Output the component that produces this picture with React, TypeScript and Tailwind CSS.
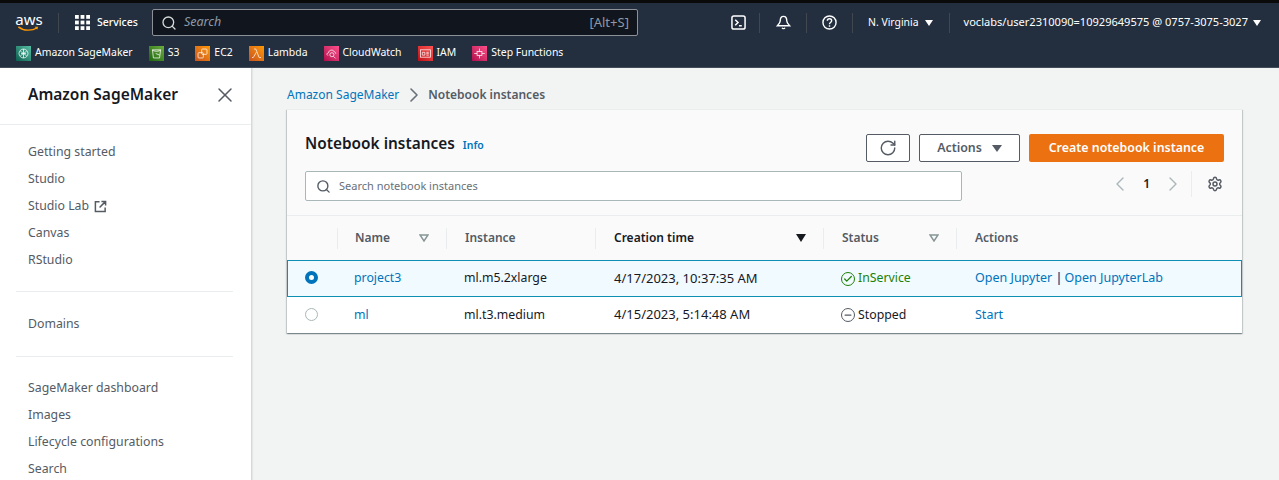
import React from 'react';
import { Check, ChevronLeft, ChevronRight, Minus, RotateCw, Search, Settings, X } from 'lucide-react';

const font = "font-['Noto_Sans','Open_Sans',sans-serif]";

const favorites = [
  { label: 'Amazon SageMaker', color: 'from-[#055f4e] to-[#56c0a7]', glyph: 'sage' },
  { label: 'S3', color: 'from-[#1b660f] to-[#6cae3e]', glyph: 's3' },
  { label: 'EC2', color: 'from-[#c8511b] to-[#ff9900]', glyph: 'ec2' },
  { label: 'Lambda', color: 'from-[#c8511b] to-[#ff9900]', glyph: 'lambda' },
  { label: 'CloudWatch', color: 'from-[#b0084d] to-[#ff4f8b]', glyph: 'cloud' },
  { label: 'IAM', color: 'from-[#bd0816] to-[#ff5252]', glyph: 'iam' },
  { label: 'Step Functions', color: 'from-[#b0084d] to-[#ff4f8b]', glyph: 'step' },
];

function FavIcon({ glyph }: { glyph: string }) {
  return (
    <svg viewBox="0 0 16 16" className="w-[13px] h-[13px]" fill="none" stroke="white" strokeWidth="0.9">
      {glyph === 'sage' && <><circle cx="8" cy="8" r="5.5" /><path d="M4 5l8 6M4 11l8-6M8 2.5v11M5 8h6" /></>}
      {glyph === 's3' && <><path d="M3 3.5h10l-1.2 10H4.2zM3 3.5c1 2.4 9 2.4 10 0" /><path d="M7 8l5 2" /></>}
      {glyph === 'ec2' && <><rect x="2.5" y="7" width="6.5" height="6.5" rx="1" /><rect x="7" y="2.5" width="6.5" height="6.5" rx="1" /></>}
      {glyph === 'lambda' && <path d="M5 2.5h2.2l4 10.5H13.5M7.8 6.5L4 13H2.5" />}
      {glyph === 'cloud' && <><path d="M3.5 10.5c-2-1-1-3.5 1-3.5 0-3.5 5.5-4.5 7-1 1.5.2 2 1.5 1.5 2.5" /><circle cx="8.5" cy="9.5" r="2.5" /><path d="M10.5 11.5l2.5 2.5" /></>}
      {glyph === 'iam' && <><rect x="2" y="3.5" width="12" height="9" /><path d="M4 6.5h3.2v3.5H4zM9 6.5h3M9 8.2h3M9 10h3" /></>}
      {glyph === 'step' && <><rect x="5" y="5.5" width="6" height="5" /><path d="M1.5 8H5M11 8h3.5M8 2v3.5M8 10.5V14" /></>}
    </svg>
  );
}

function Sep({ className }: { className: string }) {
  return <div className={`w-px h-5 bg-[#414750] ${className}`} />;
}

function TopNav() {
  return (
    <header className={`bg-[#232f3e] border-t-[3px] border-[#0a0a0a] border-b border-b-[#434d5a] h-[68px] text-white ${font}`}>
      <div className="h-[37px] pt-[2px] flex items-center pl-[15px] pr-[18px]">
        <div className="w-[28px] flex flex-col items-center">
          <span className="text-[15px] leading-[13px] font-normal">aws</span>
          <svg viewBox="0 0 28 7" className="w-[25px] h-[6px]">
            <path d="M1 1c6 5 16 5 22 1" fill="none" stroke="#ff9900" strokeWidth="1.6" />
            <path d="M20 1l4 0-1 3.5z" fill="#ff9900" />
          </svg>
        </div>
        <Sep className="ml-[15px] mr-[16px]" />
        <svg viewBox="0 0 15 15" className="w-[15px] h-[15px] fill-white">
          <rect x="0" y="0" width="3.8" height="3.8" />
          <rect x="5.6" y="0" width="3.8" height="3.8" />
          <rect x="11.2" y="0" width="3.8" height="3.8" />
          <rect x="0" y="5.6" width="3.8" height="3.8" />
          <rect x="5.6" y="5.6" width="3.8" height="3.8" />
          <rect x="11.2" y="5.6" width="3.8" height="3.8" />
          <rect x="0" y="11.2" width="3.8" height="3.8" />
          <rect x="5.6" y="11.2" width="3.8" height="3.8" />
          <rect x="11.2" y="11.2" width="3.8" height="3.8" />
        </svg>
        <span className="ml-[7px] text-[10.5px] font-medium">Services</span>
        <div className="ml-[14px] w-[486px] h-[27px] border border-[#8d9096] rounded-[2px] flex items-center pl-[8px] pr-2 bg-[#11161e]">
          <Search className="w-4 h-4 text-[#d5dbdb]" strokeWidth={2} />
          <span className="ml-[7px] text-[12.5px] italic text-[#8d99a8]">Search</span>
          <span className="ml-auto text-[13px] text-[#8d99a8]">[Alt+S]</span>
        </div>
        <div className="ml-auto flex items-center">
          <svg viewBox="0 0 16 16" className="w-[15px] h-[15px]" fill="none" stroke="white" strokeWidth="1.6">
            <rect x="1" y="1" width="14" height="14" rx="2" />
            <path d="M4.5 5l3 3-3 3M8.5 11.5h3" />
          </svg>
          <Sep className="ml-[13px] mr-[16px]" />
          <svg viewBox="0 0 16 16" className="w-[15px] h-[15px]" fill="none" stroke="white" strokeWidth="1.5">
            <path d="M8 1.5c-3 0-3.5 3-3.5 5 0 2-2 4-3 5h13c-1-1-3-3-3-5 0-2-.5-5-3.5-5zM6.5 13.5a1.6 1.6 0 0 0 3 0" />
          </svg>
          <Sep className="ml-[15px] mr-[15px]" />
          <svg viewBox="0 0 16 16" className="w-[15px] h-[15px]" fill="none" stroke="white" strokeWidth="1.5">
            <circle cx="8" cy="8" r="7" />
            <path d="M5.7 6.2c0-3 4.6-3 4.6 0 0 1.9-2.3 1.8-2.3 3.6M8 11v1.4" />
          </svg>
          <Sep className="ml-[15px] mr-[15px]" />
          <span className="text-[10.4px]">N. Virginia</span>
          <span className="ml-[6px] w-0 h-0 border-x-[4px] border-x-transparent border-t-[6px] border-t-white" />
          <Sep className="ml-[16px] mr-[14px]" />
          <span className="text-[11.05px]">voclabs/user2310090=10929649575 @ 0757-3075-3027</span>
          <span className="ml-[5px] w-0 h-0 border-x-[4px] border-x-transparent border-t-[6px] border-t-white" />
        </div>
      </div>
      <div className="h-[27px] pb-[2px] flex items-center pl-4 gap-[16px]">
        {favorites.map((f) => (
          <div key={f.label} className="flex items-center gap-[4px]">
            <span className={`mt-[2px] w-[15px] h-[15px] flex items-center justify-center bg-gradient-to-tr ${f.color}`}>
              <FavIcon glyph={f.glyph} />
            </span>
            <span className="text-[10.45px]">{f.label}</span>
          </div>
        ))}
      </div>
    </header>
  );
}

function SideLink({ children }: { children: React.ReactNode }) {
  return <div className="h-[27px] flex items-center pl-7 text-[12.3px] text-[#545b64]">{children}</div>;
}

function Sidebar() {
  return (
    <aside className="w-[252px] shrink-0 bg-white border-r border-[#d5dbdb] overflow-hidden shadow-[1px_0_1px_rgba(0,0,0,0.05)]">
      <div className="h-[57px] pb-[2px] pl-7 pr-[14px] flex items-center justify-between border-b border-[#eaeded]">
        <h2 className="text-[15.5px] font-semibold text-[#16191f]">Amazon SageMaker</h2>
        <X className="w-6 h-6 text-[#545b64]" strokeWidth={1.5} />
      </div>
      <div className="pt-[14px]">
        <SideLink>Getting started</SideLink>
        <SideLink>Studio</SideLink>
        <SideLink>
          Studio Lab
          <svg viewBox="0 0 14 14" className="w-[13px] h-[13px] ml-[5px]" fill="none" stroke="#545b64" strokeWidth="1.6">
            <path d="M6 2H1.5v10.5H12V8M8 1.5h4.5V6M12.5 1.5L6 8" />
          </svg>
        </SideLink>
        <SideLink>Canvas</SideLink>
        <SideLink>RStudio</SideLink>
      </div>
      <div className="ml-4 mr-[18px] mt-[17px] border-t border-[#eaeded]" />
      <div className="pt-[19px]">
        <SideLink>Domains</SideLink>
      </div>
      <div className="ml-4 mr-[18px] mt-[18px] border-t border-[#eaeded]" />
      <div className="pt-[18px]">
        <SideLink>SageMaker dashboard</SideLink>
        <SideLink>Images</SideLink>
        <SideLink>Lifecycle configurations</SideLink>
        <SideLink>Search</SideLink>
      </div>
    </aside>
  );
}

function SortCaret({ filled }: { filled?: boolean }) {
  if (filled) return <span className="w-0 h-0 border-x-[5px] border-x-transparent border-t-[8px] border-t-[#16191f]" />;
  return (
    <svg viewBox="0 0 10 8" className="w-[10px] h-2" fill="none" stroke="#879596" strokeWidth="1.5">
      <path d="M1 1h8L5 7z" />
    </svg>
  );
}

const columns = 'grid-cols-[50px_109px_149px_228px_133px_1fr]';

function HeadCell({ label, caret, dark, tight }: { label: string; caret?: boolean; dark?: boolean; tight?: boolean }) {
  return (
    <div className={`h-[21px] border-l border-[#eaeded] ${tight ? 'pl-[17px]' : 'pl-[18px]'} pr-[17px] flex items-center justify-between`}>
      <span className={`text-xs font-semibold ${dark ? 'text-[#16191f]' : 'text-[#545b64]'}`}>{label}</span>
      {caret && <SortCaret filled={dark} />}
    </div>
  );
}

function Row({ selected, name, type, time, status, actions }: {
  selected?: boolean;
  name: string;
  type: string;
  time: string;
  status: 'in' | 'stopped';
  actions: React.ReactNode;
}) {
  return (
    <div className={`grid ${columns} items-center text-[12.3px] ${selected ? 'h-[37px] bg-[#f1faff] shadow-[inset_0_0_0_1px_#0f8fb3]' : 'h-[36px] bg-white'}`}>
      <div className="pl-[18px] mb-[2px]">
        {selected ? (
          <span className="block w-[13px] h-[13px] rounded-full border-[4px] border-[#0073bb] bg-white" />
        ) : (
          <span className="block w-[13px] h-[13px] rounded-full border border-[#aab7b8] bg-white" />
        )}
      </div>
      <div className="pl-[17px] text-[#0073bb]">{name}</div>
      <div className="pl-[18px] text-[#16191f]">{type}</div>
      <div className="pl-[19px] text-[13px] text-[#16191f]">{time}</div>
      <div className="pl-[18px] flex items-center gap-[3px]">
        {status === 'in' ? (
          <>
            <span className="w-[14px] h-[14px] rounded-full border-[1.5px] border-[#1d8102] flex items-center justify-center">
              <Check className="w-[10px] h-[10px] text-[#1d8102]" strokeWidth={3} />
            </span>
            <span className="text-[#1d8102]">InService</span>
          </>
        ) : (
          <>
            <span className="w-[14px] h-[14px] rounded-full border-[1.5px] border-[#545b64] flex items-center justify-center">
              <Minus className="w-[10px] h-[10px] text-[#545b64]" strokeWidth={3} />
            </span>
            <span className="text-[#16191f]">Stopped</span>
          </>
        )}
      </div>
      <div className="pl-[19px] text-[12.5px] text-[#0073bb]">{actions}</div>
    </div>
  );
}

function InstancesCard() {
  return (
    <section className="mt-[4px] bg-white border-t border-[#eaeded] shadow-[0_1px_1px_rgba(0,28,36,0.3),1px_1px_1px_rgba(0,28,36,0.15),-1px_1px_1px_rgba(0,28,36,0.15)]">
      <div className="bg-[#fafafa] h-[106px] border-b border-[#eaeded] pl-[18px] pr-[18px] pt-[24px]">
        <div className="flex items-start justify-between">
          <div className="flex items-baseline -mt-[2px]">
            <h1 className="text-[15.4px] font-semibold text-[#16191f]">Notebook instances</h1>
            <span className="ml-2 text-[10.5px] font-semibold text-[#0073bb]">Info</span>
          </div>
          <div className="flex items-center gap-[9px]">
            <button className="w-[44px] h-[28px] bg-white border border-[#545b64] rounded-[2px] flex items-center justify-center">
              <RotateCw className="w-[18px] h-[18px] text-[#545b64]" strokeWidth={1.9} />
            </button>
            <button className="w-[101px] h-[28px] bg-white border border-[#545b64] rounded-[2px] flex items-center justify-center gap-[10px] text-[12.4px] font-semibold text-[#545b64]">
              Actions
              <span className="w-0 h-0 border-x-[5px] border-x-transparent border-t-[7px] border-t-[#545b64]" />
            </button>
            <button className="w-[195px] h-[28px] bg-[#ec7211] rounded-[2px] text-[12.4px] font-semibold text-white">
              Create notebook instance
            </button>
          </div>
        </div>
        <div className="mt-[9px] flex items-center justify-between">
          <div className="w-[657px] h-[30px] bg-white border border-[#aab7b8] rounded-[2px] flex items-center pl-[10px]">
            <Search className="w-[15px] h-[15px] text-[#545b64]" strokeWidth={2.2} />
            <span className="ml-[8px] text-[11px] text-[#687078]">Search notebook instances</span>
          </div>
          <div className="flex items-center text-[#aab7b8] mb-[4px] pr-px">
            <ChevronLeft className="w-6 h-6" strokeWidth={1.4} />
            <span className="mx-[11px] text-xs font-semibold text-[#16191f]">1</span>
            <ChevronRight className="w-6 h-6" strokeWidth={1.4} />
            <div className="w-px h-[26px] bg-[#eaeded] ml-[6px] mr-[15px]" />
            <Settings className="w-4 h-4 text-[#545b64]" strokeWidth={2.2} />
          </div>
        </div>
      </div>
      <div className={`grid ${columns} items-center h-[44px] bg-[#fafafa]`}>
        <div />
        <HeadCell label="Name" caret tight />
        <HeadCell label="Instance" />
        <HeadCell label="Creation time" caret dark />
        <HeadCell label="Status" caret />
        <HeadCell label="Actions" />
      </div>
      <Row
        selected
        name="project3"
        type="ml.m5.2xlarge"
        time="4/17/2023, 10:37:35 AM"
        status="in"
        actions={<>Open Jupyter <span className="text-[#0b4f87] font-semibold -mr-px">|</span> Open JupyterLab</>}
      />
      <Row
        name="ml"
        type="ml.t3.medium"
        time="4/15/2023, 5:14:48 AM"
        status="stopped"
        actions="Start"
      />
    </section>
  );
}

export default function App() {
  return (
    <div className={`h-[480px] w-[1279px] overflow-hidden bg-[#f2f3f3] flex flex-col ${font}`}>
      <TopNav />
      <div className="flex flex-1 min-h-0">
        <Sidebar />
        <main className="flex-1 pl-[35px] pr-[37px] pt-[16px]">
          <div className="flex items-center text-xs h-[21px]">
            <span className="text-[#0073bb]">Amazon SageMaker</span>
            <ChevronRight className="w-6 h-6 text-[#687078] ml-[3px] mr-[2px] shrink-0" strokeWidth={1.6} />
            <span className="font-semibold text-[#545b64]">Notebook instances</span>
          </div>
          <InstancesCard />
        </main>
      </div>
    </div>
  );
}
